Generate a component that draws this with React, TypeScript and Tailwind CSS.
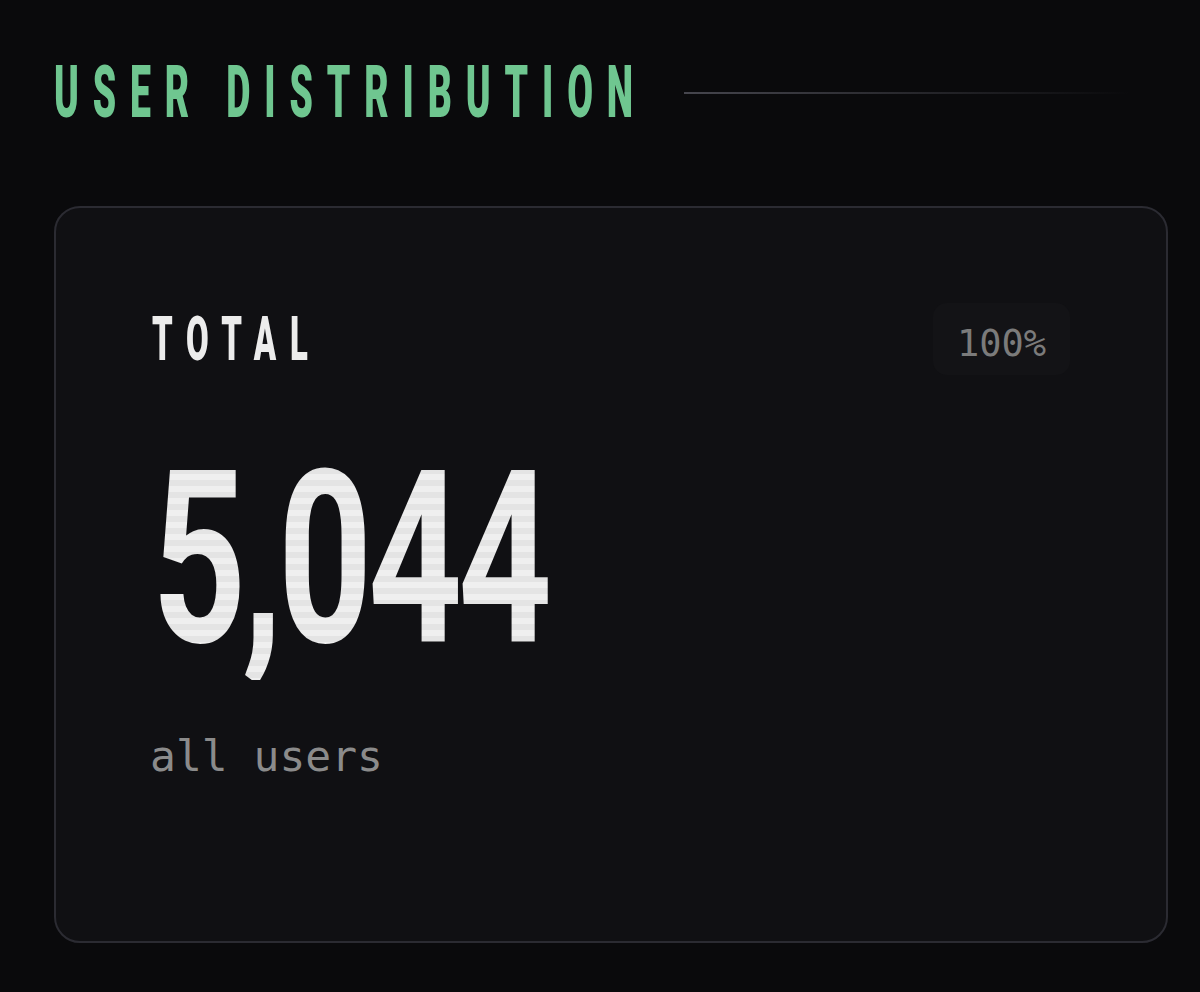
export default function App() {
  const display = { fontFamily: 'Roboto, "Liberation Sans", sans-serif' };
  const mono = { fontFamily: '"DejaVu Sans Mono", "Liberation Mono", monospace' };

  return (
    <div className="min-h-[992px] w-[1200px] bg-[#0a0a0c] pl-[54px] pr-[32px] pt-[57px]">
      {/* Section heading */}
      <div className="flex items-center gap-[48px]">
        <h2 style={display} className="w-[582px] shrink-0 whitespace-nowrap text-[72px] font-black leading-none text-[#6fc690]">
          <span className="inline-block origin-left scale-x-[0.52] tracking-[0.37em]">USER DISTRIBUTION</span>
        </h2>
        <div className="mr-[38px] h-[2px] flex-1 bg-gradient-to-r from-[#46464e] to-transparent" />
      </div>

      {/* Card */}
      <div className="mt-[77px] h-[737px] rounded-[26px] border-2 border-[#2b2b32] bg-[#101013] px-[96px] pt-[100px]">
        <div className="flex items-start justify-between">
          <div style={display} className="w-[158px] whitespace-nowrap text-[62px] font-black leading-none text-[#ececec]">
            <span className="inline-block origin-left scale-x-[0.53] tracking-[0.42em]">TOTAL</span>
          </div>
          <div
            style={mono}
            className="-mt-[5px] flex h-[72px] items-center rounded-[14px] bg-[#131316] px-[24px] pt-[9px] text-[37px] leading-none text-[#7b7b7b]"
          >
            100%
          </div>
        </div>

        <div style={display} className="mt-[63px] w-[393px] whitespace-nowrap text-[242px] font-bold leading-none">
          <span className="inline-block origin-left scale-x-[0.68] bg-[repeating-linear-gradient(180deg,#efefef_0px,#efefef_6px,#e4e4e4_6px,#e4e4e4_12px)] bg-clip-text tracking-[-0.027em] text-transparent">
            5,044
          </span>
        </div>

        <div style={mono} className="-ml-[2px] mt-[55px] text-[43px] leading-none text-[#8b8b8b]">
          all users
        </div>
      </div>
    </div>
  );
}
